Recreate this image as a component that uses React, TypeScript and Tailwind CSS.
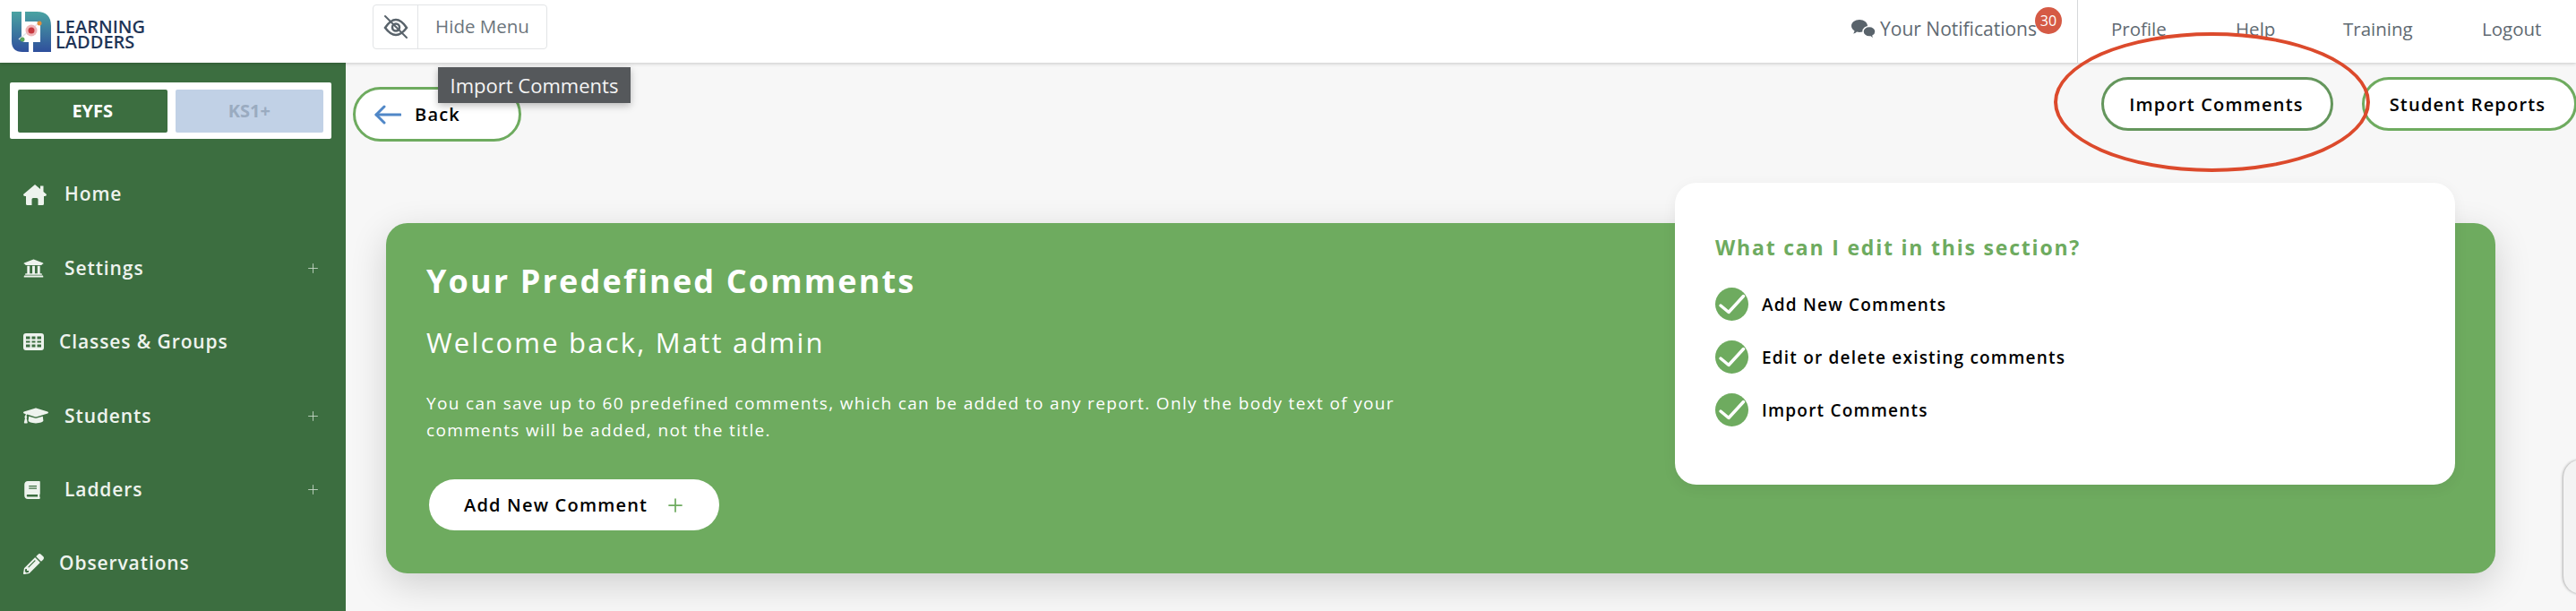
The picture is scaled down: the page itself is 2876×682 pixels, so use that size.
import React from 'react';
import { Plus } from 'lucide-react';
import { FaBook, FaGraduationCap, FaPencilAlt, FaUniversity } from 'react-icons/fa';

const HomeIcon = () => (
  <svg width="26" height="23" viewBox="0 0 26 23" fill="currentColor">
    <path d="M13 0L19 5V1.5H22.5V8L26 11Q26 13 24 13H23V21.5Q23 23 21.5 23H16.5V16.5Q16.5 15 15 15H11Q9.5 15 9.5 16.5V23H4.5Q3 23 3 21.5V13H2Q0 13 0 11Z" />
  </svg>
);

const TableIcon = () => (
  <svg width="23" height="19" viewBox="0 0 23 19" fill="currentColor">
    <path
      fillRule="evenodd"
      d="M3 0H20Q23 0 23 3V16Q23 19 20 19H3Q0 19 0 16V3Q0 0 3 0ZM3 3.5V6.5H7.5V3.5ZM9.5 3.5V6.5H13.5V3.5ZM15.5 3.5V6.5H20V3.5ZM3 8.5V10.5H7.5V8.5ZM9.5 8.5V10.5H13.5V8.5ZM15.5 8.5V10.5H20V8.5ZM3 12.5V15.5H7.5V12.5ZM9.5 12.5V15.5H13.5V12.5ZM15.5 12.5V15.5H20V12.5Z"
    />
  </svg>
);

const EyeSlash = () => (
  <svg width="28" height="28" viewBox="0 0 28 28" fill="none" stroke="currentColor" strokeLinecap="round">
    <path d="M2 15Q8 6 14 6Q20 6 26 15Q20 23 14 23Q8 23 2 15Z" strokeWidth="2.5" />
    <circle cx="14" cy="14.5" r="4" strokeWidth="2.5" />
    <path d="M2 2L26 26" strokeWidth="2" />
  </svg>
);

const CommentsIcon = () => (
  <svg width="27" height="22" viewBox="0 0 27 22" className="mr-[5px] text-[#59636b]" fill="currentColor">
    <path d="M9 0C14 0 18 3 18 7C18 11 14 14 9 14C8 14 7 13.9 6 13.6C5 14.8 3.4 15.5 1.6 15.6C2.8 14.6 3.4 13.6 3.5 12.4C1.4 11.2 0 9.2 0 7C0 3 4 0 9 0Z" />
    <path d="M20 7.5C23.8 7.5 27 10 27 13.2C27 15.2 25.8 16.9 24 18C24 19.2 24.7 20.3 26 21.4C24 21.3 22.3 20.4 21.3 19C20.9 19 20.4 19.1 20 19.1C16.2 19.1 13 16.5 13 13.3C13 10 16.2 7.5 20 7.5Z" stroke="#ffffff" strokeWidth="1.5" />
  </svg>
);

const BackArrow = () => (
  <svg width="30" height="22" viewBox="0 0 30 22" fill="none" stroke="#5087c7" strokeWidth="3" strokeLinecap="round" strokeLinejoin="round" className="mr-[15px]">
    <path d="M29 11H2" />
    <path d="M11 2L2 11L11 20" />
  </svg>
);

const CheckMark = () => (
  <svg width="37" height="37" viewBox="0 0 37 37" fill="none" stroke="#ffffff" strokeWidth="3.5" strokeLinecap="round" strokeLinejoin="round">
    <path d="M6 20L15 27.5L31.5 9.5" />
  </svg>
);

const navItems = [
  { label: 'Home', icon: <HomeIcon />, gap: 'ml-[20px]', more: false },
  { label: 'Settings', icon: <FaUniversity size={23} />, gap: 'ml-[23px]', more: true },
  { label: 'Classes & Groups', icon: <TableIcon />, gap: 'ml-[17px]', more: false },
  { label: 'Students', icon: <FaGraduationCap size={28} />, gap: 'ml-[18px]', more: true },
  { label: 'Ladders', icon: <FaBook size={20} />, gap: 'ml-[26px]', more: true },
  { label: 'Observations', icon: <FaPencilAlt size={23} />, gap: 'ml-[17px]', more: false },
];

const topLinks = [
  { label: 'Profile', width: 'w-[139px]' },
  { label: 'Help', width: 'w-[120px]' },
  { label: 'Training', width: 'w-[155px]' },
  { label: 'Logout', width: 'w-[67px]' },
];

const editItems = ['Add New Comments', 'Edit or delete existing comments', 'Import Comments'];

const Logo = () => (
  <div className="flex items-center ml-[13px] mt-[1px]">
    <svg width="45" height="45" viewBox="0 0 45 45" fill="none">
      <defs>
        <linearGradient id="logoFill" x1="0" y1="0" x2="0" y2="45" gradientUnits="userSpaceOnUse">
          <stop stopColor="#4aa3a2" />
          <stop offset="1" stopColor="#2f4f9c" />
        </linearGradient>
      </defs>
      <path d="M0 0H11V30Q11 34 15 34H19V45H12Q0 45 0 33Z M15 0H28Q44 0 44 16V45H24V34H32V16Q32 11 27 11H15Z" fill="url(#logoFill)" />
      <path d="M8 31L31 12" stroke="#e5e7eb" strokeWidth="1.5" />
      <circle cx="22" cy="21" r="6.5" fill="#eeb5b8" />
      <circle cx="22" cy="21" r="3.5" fill="#c8383f" />
      <circle cx="31" cy="13" r="2.5" fill="#e08f3f" />
      <circle cx="12" cy="31" r="2.5" fill="#5da85c" />
    </svg>
    <div className="ml-[4px] text-[#1f3557] text-[20px] leading-[17px] font-semibold pt-[4px]">
      <div>LEARNING</div>
      <div>LADDERS</div>
    </div>
  </div>
);

const App = () => {
  return (
    <div className="relative w-[2876px] h-[682px] overflow-hidden bg-[#f7f7f7] font-['Open_Sans',sans-serif]">
      {/* Top bar */}
      <header className="relative z-10 h-[70px] bg-white flex items-center shadow-[0_1px_4px_rgba(0,0,0,0.2)]">
        <div className="w-[416px] h-full flex items-center">
          <Logo />
        </div>
        <div className="flex items-stretch h-[50px] mb-[11px] border border-[#e2e4e6] rounded-[4px]">
          <div className="w-[50px] flex items-center justify-center border-r border-[#e2e4e6] text-[#59636b]">
            <EyeSlash />
          </div>
          <div className="w-[143px] flex items-center justify-center text-[20.5px] text-[#6c757d]">Hide Menu</div>
        </div>

        <div className="ml-auto flex items-center text-[20.5px] text-[#5f6a72] h-full">
          <div className="relative flex items-center pr-[45px] mb-[4px]">
            <CommentsIcon />
            <span className="text-[21px]">Your Notifications</span>
            <span className="absolute right-[17px] top-[-9px] w-[30px] h-[30px] rounded-full bg-[#d55a45] text-white text-[16px] flex items-center justify-center">
              30
            </span>
          </div>
          <div className="h-full flex items-center border-l border-[#d6d8da] pl-[37px] pr-[38px]">
            {topLinks.map(link => (
              <span key={link.label} className={`${link.width} mb-[6px]`}>{link.label}</span>
            ))}
          </div>
        </div>
      </header>

      <div className="flex h-[612px]">
        {/* Sidebar */}
        <aside className="w-[386px] shrink-0 bg-[#3c6e40] pt-[22px]">
          <div className="mx-[11px] w-[359px] h-[63px] bg-white flex items-center gap-[9px] px-[9px] rounded-[2px]">
            <div className="w-[167px] h-[48px] bg-[#3c6e40] rounded-[2px] flex items-center justify-center text-white text-[20px] font-bold">EYFS</div>
            <div className="w-[166px] h-[48px] bg-[#c1d1e6] rounded-[2px] flex items-center justify-center text-[#9aabc0] text-[20px] font-bold">KS1+</div>
          </div>
          <nav className="mt-[21px]">
            {navItems.map(item => (
              <div key={item.label} className="h-[82.4px] flex items-center pl-[26px] pr-[28px] text-[#eef3ee]">
                {item.icon}
                <span className={`${item.gap} text-[21px] font-semibold tracking-[0.9px]`}>{item.label}</span>
                {item.more && <Plus size={17} strokeWidth={1.25} className="ml-auto text-[#c5d6c6]" />}
              </div>
            ))}
          </nav>
        </aside>

        {/* Main content */}
        <main className="flex-1 min-w-0">
          <div className="flex items-start justify-between pt-[16px]">
            <button className="mt-[11px] ml-[8px] w-[188px] h-[61px] rounded-full border-[3px] border-[#6eab5f] bg-white flex items-center pl-[21px] text-[20px] font-semibold tracking-[1.2px] text-black">
              <BackArrow />
              Back
            </button>
            <div className="flex gap-[32px] -mr-[1px]">
              <button className="w-[259px] h-[60px] pt-[2px] pr-[2px] rounded-full border-[3px] border-[#64965c] bg-white text-[20px] font-semibold tracking-[1.2px] text-black">
                Import Comments
              </button>
              <button className="w-[240px] h-[60px] pt-[2px] pr-[4px] rounded-full border-[3px] border-[#6eab5f] bg-white text-[20px] font-semibold tracking-[1.2px] text-black">
                Student Reports
              </button>
            </div>
          </div>

          <section className="ml-[45px] mt-[91px] w-[2355px] h-[391px] rounded-[24px] bg-[#6eab5f] shadow-[0_12px_40px_rgba(0,0,0,0.16)] flex justify-between">
            <div className="pl-[45px] pt-[40px] text-white">
              <h1 className="text-[36px] leading-[50px] font-bold tracking-[2.15px]">Your Predefined Comments</h1>
              <h2 className="mt-[18px] text-[31px] leading-[50px] font-medium tracking-[2.2px]">Welcome back, Matt admin</h2>
              <p className="mt-[28px] w-[1100px] text-[19px] leading-[30px] tracking-[1.35px]">
                You can save up to 60 predefined comments, which can be added to any report. Only the body text of your comments will be added, not the title.
              </p>
              <button className="mt-[40px] ml-[3px] w-[324px] h-[57px] rounded-full bg-white flex items-center pl-[39px] text-[20px] font-semibold tracking-[1.2px] text-black">
                Add New Comment
                <Plus size={24} strokeWidth={1.75} className="ml-[19px] text-[#6eab5f]" />
              </button>
            </div>

            <div className="mr-[45px] -mt-[45px] w-[871px] h-[337px] rounded-[24px] bg-white pl-[45px] pt-[53px] shadow-[0_4px_16px_rgba(0,0,0,0.06)]">
              <h3 className="text-[23px] leading-[38px] font-bold tracking-[1.8px] text-[#6eab5f]">What can I edit in this section?</h3>
              <ul className="mt-[26px] flex flex-col gap-[22px]">
                {editItems.map(item => (
                  <li key={item} className="flex items-center h-[37px]">
                    <span className="w-[37px] h-[37px] rounded-full bg-[#6eab5f] flex items-center justify-center">
                      <CheckMark />
                    </span>
                    <span className="ml-[15px] pt-[2px] text-[19px] font-semibold tracking-[1.2px] text-black">{item}</span>
                  </li>
                ))}
              </ul>
            </div>
          </section>
        </main>
      </div>

      {/* Tooltip over the back button */}
      <div className="absolute z-20 left-[489px] top-[75px] w-[215px] h-[40px] bg-[#55585b] text-[#f4f4f4] text-[22px] flex items-center justify-center shadow-[0_3px_8px_rgba(0,0,0,0.25)]">
        Import Comments
      </div>

      {/* Hand drawn annotation round the button */}
      <div className="absolute z-20 left-[2293px] top-[36px] w-[353px] h-[156px] rounded-[50%] border-[4px] border-[#dc4a2c] pointer-events-none" />

      {/* Side tab clipped by the window edge */}
      <div className="absolute z-20 left-[2862px] top-[513px] w-[40px] h-[150px] rounded-l-[20px] bg-[#f3f3f3] shadow-[-1px_0_3px_rgba(0,0,0,0.3)]" />
    </div>
  );
};

export default App;
